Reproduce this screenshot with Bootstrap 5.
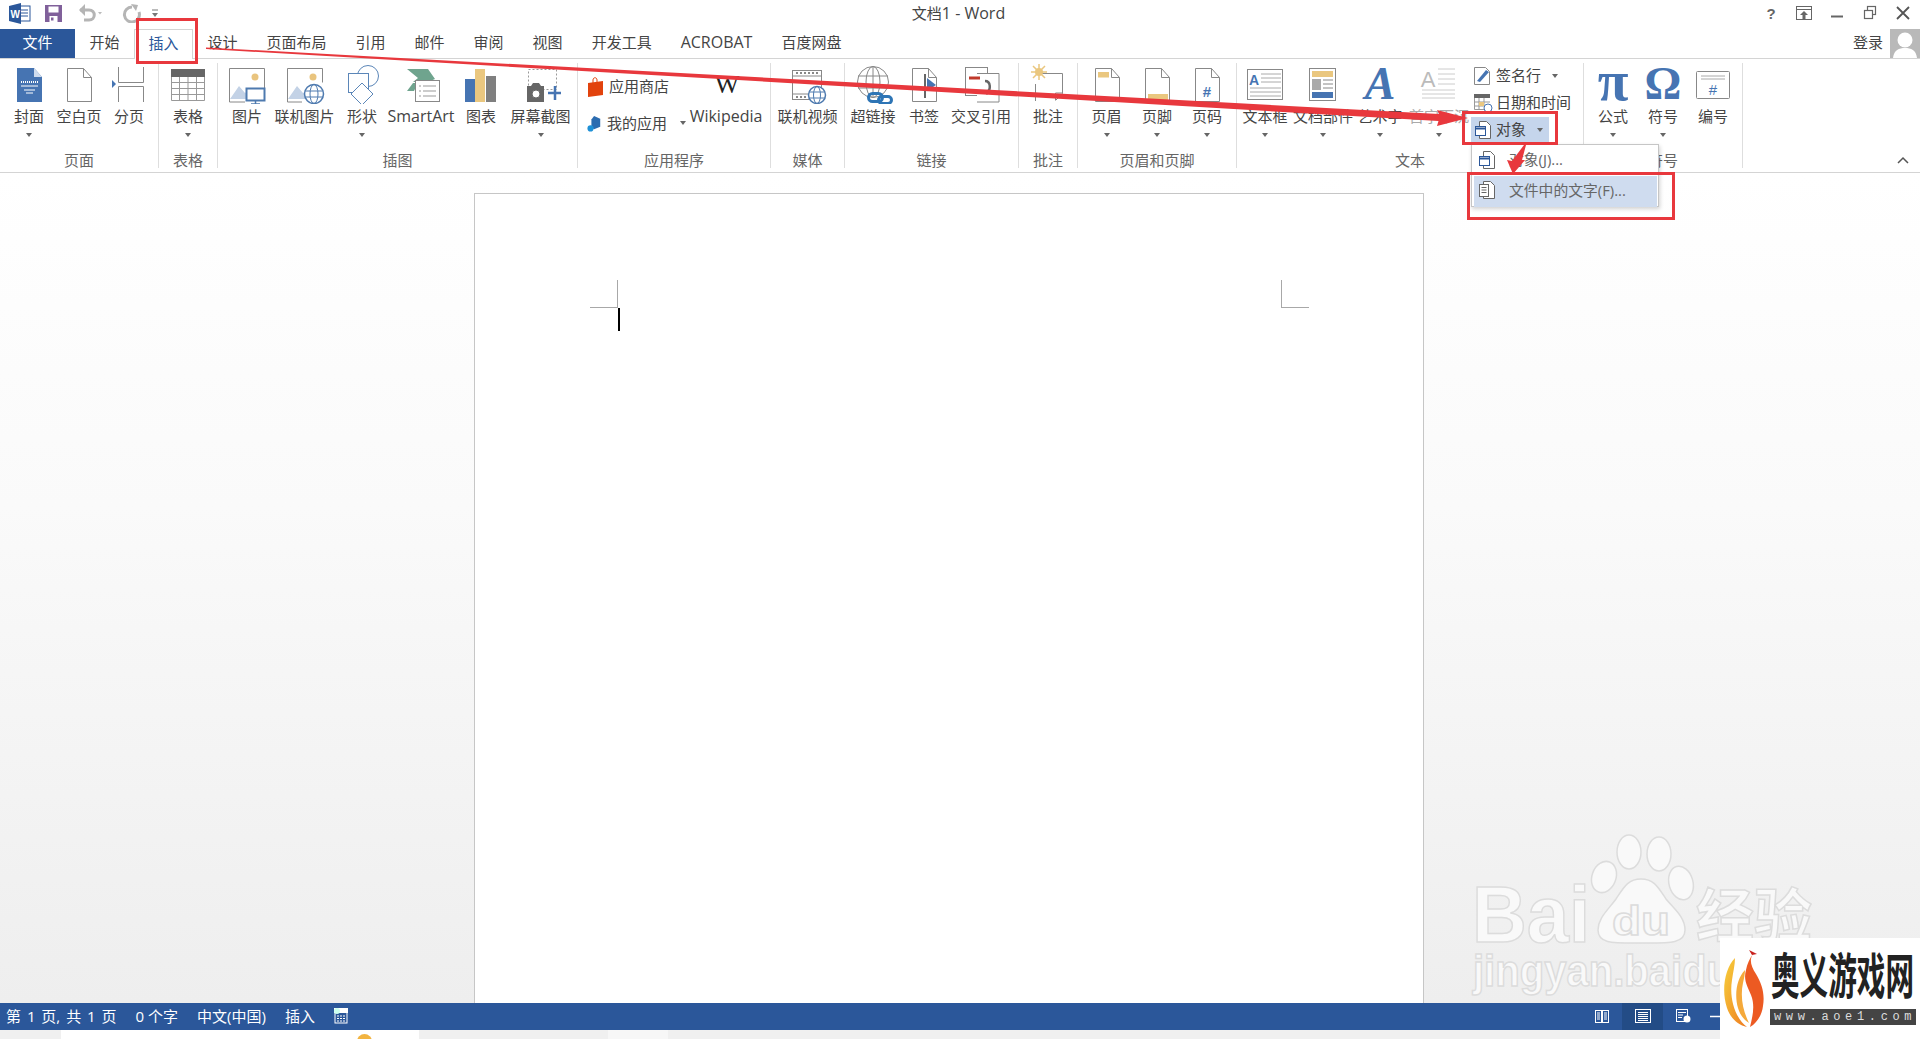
<!DOCTYPE html>
<html lang="zh-CN">
<head>
  <meta charset="UTF-8" />
  <meta name="viewport" content="width=device-width, initial-scale=1.0"/>
  <title>文档1 - Word</title>
  <link href="https://cdn.jsdelivr.net/npm/bootstrap@5.3.0/dist/css/bootstrap.min.css" rel="stylesheet"/>
  <style>
    html, body { height: 100%; }
    body { width: 1920px; height: 1039px; overflow: hidden; background: #fff; color: #444; font-family: "Open Sans", "Noto Sans CJK SC", sans-serif; font-size: 15px; position: relative; }
    .lat-txt { font-size: 16px; }
    .title-row { height: 29px; padding-bottom: 3px; }
    .title-side { flex: 1 1 0; }
    .qat { padding-left: 9px; gap: 14px; }
    .qat-undo { margin-left: 2px; }
    .qat-redo { margin-left: 6px; }
    .qat-more { margin-left: -5px; }
    .win-ctl { padding-right: 7px; gap: 13px; }
    .title-txt { line-height: 26px; color: #444; margin-right: 5px; }
    .tab-row { height: 30px; border-bottom: 1px solid #d4d4d4; }
    .tab-file { width: 75px; background: #2b579a; color: #fff; text-align: center; line-height: 27px; }
    .tab-item { padding: 0 14.5px; line-height: 27px; height: 30px; white-space: nowrap; }
    .tab-on { color: #2b579a; background: #fff; border: 1px solid #d4d4d4; border-bottom: 0; padding: 0 13.5px; }
    .login-txt { margin-right: 7px; line-height: 27px; }
    .avatar { width: 30px; height: 29px; background: #b9b9b9; display: block; }
    .ribbon { height: 114px; border-bottom: 1px solid #d4d4d4; padding-top: 4px; }
    .rgroup { height: 105px; border-right: 1px solid #dedede; flex: none; }
    .g159 { width: 159px; } .g59 { width: 59px; } .g360 { width: 360px; } .g193 { width: 193px; }
    .g74 { width: 74px; } .g174 { width: 174px; } .g347 { width: 347px; }
    .ritems { flex: 1 1 auto; padding-top: 1px; }
    .pl3 { padding-left: 3px; } .pl4 { padding-left: 4px; }
    .ritem { flex: none; display: flex; flex-direction: column; align-items: center; white-space: nowrap; }
    .ritem svg { display: block; flex: none; }
    .ritem span { line-height: 20px; margin-top: 2px; }
    .gly { height: 40px; flex: none; font-family: "Liberation Serif", serif; font-weight: 700; color: #4674b2; font-size: 46px; line-height: 40px; }
    .gly-pi { font-size: 56px; line-height: 34px; }
    .gly-a { font-style: italic; }
    .w46 { width: 46px; } .w50 { width: 50px; } .w51 { width: 51px; } .w54 { width: 54px; } .w56 { width: 56px; } .w57 { width: 57px; } .w58 { width: 58px; }
    .w59 { width: 59px; } .w60 { width: 60px; } .w64 { width: 64px; } .w68 { width: 68px; } .w73 { width: 73px; } .w80 { width: 80px; }
    .drop { width: 0; height: 0; border-left: 3.5px solid transparent; border-right: 3.5px solid transparent; border-top: 4px solid #666; margin-top: 7px; }
    .drop-in { margin: 0 0 0 8px; }
    .rlabel { line-height: 16px; text-align: center; color: #666; }
    .dim-txt { color: #aaa; }
    .small-col { width: 108px; flex: none; padding-top: 12px; }
    .small-btn { height: 20px; line-height: 20px; white-space: nowrap; padding-left: 9px; gap: 5px; margin-bottom: 17px; }
    .small-btn svg { margin-top: 1px; }
    .txt-col { width: 112px; flex: none; margin-top: -1px; }
    .txt-btn { height: 27px; white-space: nowrap; padding: 0 0 2px 2px; gap: 3px; }
    .txt-btn svg { flex: none; }
    .txt-on { background: #c5d5ec; width: 78px; height: 27px; position: relative; }
    .collapse-arrow { position: absolute; left: 1897px; top: 156px; }
    .doc-area { height: 830px; padding: 20px 0 0 474px; background: linear-gradient(#fff 0, #fafafa 40%, #eeeeee 100%); }
    .doc-page { width: 950px; height: 810px; background: #fff; border: 1px solid #c6c6c6; border-bottom: 0; position: relative; }
    .crop-mark { position: absolute; top: 86px; width: 28px; height: 28px; border-color: #a8a8a8; border-style: solid; border-width: 0; }
    .crop-l { left: 115px; border-right-width: 1px; border-bottom-width: 1px; }
    .crop-r { left: 806px; border-left-width: 1px; border-bottom-width: 1px; }
    .caret-bar { position: absolute; left: 143px; top: 114px; width: 2px; height: 23px; background: #000; }
    .status-bar { height: 27px; background: #2b579a; color: #fff; padding: 0 0 1px 6px; gap: 19px; font-size: 15px; }
    .stat-page { word-spacing: 2px; }
    .status-right { margin-left: auto; padding-right: 200px; }
    .view-btn { width: 41px; height: 27px; }
    .view-on { background: #234c86; }
    .zoom-minus { margin-left: 6px; }
    .under-strip { height: 9px; background: #f0f0f0; padding-left: 61px; }
    .task-a { width: 358px; background: #fff; position: relative; }
    .task-dot { position: absolute; left: 296px; top: 4px; width: 15px; height: 15px; border-radius: 50%; background: #f2b441; }
    .task-b { width: 60px; margin-left: 189px; background: #f7f7f7; }
    .menu-box { position: absolute; left: 0; top: 27px; width: 188px; height: 63px; margin: 0; padding: 2px 1px 2px 2px; border-radius: 0; border: 1px solid #c6c6c6; box-shadow: 1px 2px 4px rgba(0,0,0,.18); display: block; z-index: 5; font-size: 14.8px; }
    .menu-line { height: 27px; padding: 0 0 2px 3px; gap: 12px; color: #666; white-space: nowrap; }
    .menu-hot { height: 31px; margin-top: 2px; background: #cfdcef; padding-bottom: 3px; }
    .overlay-svg { position: absolute; left: 0; top: 0; pointer-events: none; }
    .over-red { z-index: 10; }
    .over-mark { z-index: 1; }
    .logo-box { position: absolute; left: 1720px; top: 938px; width: 200px; height: 101px; background: #fff; z-index: 8; padding: 10px 9px 9px 3px; gap: 5px; }
    .logo-cn { height: 52px; font-size: 28.6px; font-weight: 700; color: #222; line-height: 52px; white-space: nowrap; letter-spacing: 0; font-family: "Noto Sans CJK SC", sans-serif; padding-left: 1px; }
    .logo-cn span { display: inline-block; transform: scaleY(1.7); }
    .logo-url { height: 16px; margin-top: 9px; background: #444; color: #ddd; font: 12px/16px "Liberation Mono", monospace; letter-spacing: 4.65px; padding-left: 4px; white-space: nowrap; overflow: hidden; }
    .logo-flame { flex: none; }
  </style>
</head>
<body>

  <!-- title bar -->
  <div class="title-row d-flex align-items-center">
    <div class="title-side d-flex align-items-center qat">
      <svg width="22" height="21" viewBox="0 0 22 21"><rect x="9" y="3" width="12" height="15" fill="#fff" stroke="#2b579a"/><path d="M12 7h7M12 10h7M12 13h7" stroke="#2b579a"/><path d="M0 3l12-3v21L0 18z" fill="#2b579a"/><text x="1.5" y="14.5" fill="#fff" font-size="10" font-weight="700" font-family="Liberation Sans">W</text></svg>
      <svg width="17" height="17" viewBox="0 0 17 17"><path d="M0 0h17v17H0z" fill="#80609a"/><rect x="3.5" y="1.5" width="10" height="6" fill="#fff"/><rect x="4.5" y="11" width="8" height="6" fill="#fff"/><rect x="6" y="12.5" width="2.5" height="3" fill="#80609a"/></svg>
      <svg class="qat-undo" width="24" height="18" viewBox="0 0 24 18"><path d="M2 6h9c7 0 7 10 0 10H6" fill="none" stroke="#b5b5b5" stroke-width="3"/><path d="M7 0L1 6l6 6z" fill="#b5b5b5"/><path d="M20 8h4l-2 2.500z" fill="#bbb"/></svg>
      <svg class="qat-redo" width="20" height="19" viewBox="0 0 20 19"><path d="M10 3a7.500 7.500 0 1 0 7 5" fill="none" stroke="#b5b5b5" stroke-width="3"/><path d="M9 0l7 1-2 6z" fill="#b5b5b5"/></svg>
      <svg class="qat-more" width="8" height="9" viewBox="0 0 8 9"><path d="M1 1h6" stroke="#777"/><path d="M1 4h6L4 8z" fill="#777"/></svg>
    </div>
    <div class="title-txt">文档<span class="lat-txt">1 - Word</span></div>
    <div class="title-side d-flex align-items-center justify-content-end win-ctl">
      <svg width="20" height="16" viewBox="0 0 20 16"><text x="10" y="14" text-anchor="middle" font-size="15" font-weight="700" fill="#666" font-family="Liberation Sans">?</text></svg>
      <svg width="20" height="16" viewBox="0 0 20 16"><rect x="2.500" y="1.500" width="15" height="13" fill="none" stroke="#666"/><path d="M2 4.500h16" stroke="#666"/><path d="M10 6l4 4h-2.500v4h-3v-4H6z" fill="#666"/></svg>
      <svg width="20" height="16" viewBox="0 0 20 16"><path d="M4 11.500h12" stroke="#666" stroke-width="2"/></svg>
      <svg width="20" height="16" viewBox="0 0 20 16"><rect x="7.500" y="1.500" width="8" height="8" fill="none" stroke="#666" stroke-width="1.200"/><rect x="4.500" y="5.500" width="8" height="8" fill="#fff" stroke="#666" stroke-width="1.200"/></svg>
      <svg width="20" height="16" viewBox="0 0 20 16"><path d="M4 2l12 12M16 2L4 14" stroke="#555" stroke-width="1.800"/></svg>
    </div>
  </div>

  <!-- tabs -->
  <div class="tab-row d-flex">
    <div class="tab-file">文件</div>
    <div class="tab-item">开始</div>
    <div class="tab-item tab-on">插入</div>
    <div class="tab-item">设计</div>
    <div class="tab-item">页面布局</div>
    <div class="tab-item">引用</div>
    <div class="tab-item">邮件</div>
    <div class="tab-item">审阅</div>
    <div class="tab-item">视图</div>
    <div class="tab-item">开发工具</div>
    <div class="tab-item lat-txt">ACROBAT</div>
    <div class="tab-item">百度网盘</div>
    <div class="ms-auto d-flex">
      <div class="login-txt">登录</div>
      <svg class="avatar" viewBox="0 0 30 29"><circle cx="15" cy="11" r="7.500" fill="#fff"/><path d="M3 29c1-8 6-10 12-10s11 2 12 10z" fill="#fff"/></svg>
    </div>
  </div>

  <!-- ribbon -->
  <div class="ribbon d-flex">

    <div class="rgroup g159 d-flex flex-column">
      <div class="ritems d-flex pl4">
        <div class="ritem w50"><svg width="40" height="40" viewBox="0 0 40 40"><path d="M8 4h17l8 9v25H8z" fill="#4674b2"/><path d="M25 4v9h8z" fill="#cfdcee"/><path d="M12 18h17" stroke="#fff" stroke-width="2" stroke-dasharray="1 1"/><path d="M12 22h17M15 26h11M17 29h7" stroke="#fff"/></svg><span>封面</span><i class="drop"></i></div>
        <div class="ritem w50"><svg width="40" height="40" viewBox="0 0 40 40"><path d="M8.500 4.500h16l8 9v24h-24z" fill="#fff" stroke="#888"/><path d="M24.500 4.500v9h8" fill="none" stroke="#888"/></svg><span>空白页</span></div>
        <div class="ritem w50"><svg width="40" height="40" viewBox="0 0 40 40"><path d="M9.500 3v15.500h25V3M9.500 38V22.500h25V38" fill="none" stroke="#888"/><path d="M3 16l4 4-4 4z" fill="#4674b2"/></svg><span>分页</span></div>
      </div>
      <div class="rlabel">页面</div>
    </div>

    <div class="rgroup g59 d-flex flex-column">
      <div class="ritems d-flex">
        <div class="ritem w58"><svg width="40" height="40" viewBox="0 0 40 40"><rect x="3" y="5" width="34" height="8" fill="#666"/><path d="M3.500 13v23.500h33V13M3 18.500h34M3 24.500h34M3 30.500h34M11.500 13v24M20 13v24M28.500 13v24" fill="none" stroke="#999"/></svg><span>表格</span><i class="drop"></i></div>
      </div>
      <div class="rlabel">表格</div>
    </div>

    <div class="rgroup g360 d-flex flex-column">
      <div class="ritems d-flex">
        <div class="ritem w58"><svg width="40" height="40" viewBox="0 0 40 40"><path d="M2.500 4.500h35v20M18 38H2.500V4.500" fill="none" stroke="#888"/><circle cx="28" cy="13" r="3.500" fill="#e9c47e"/><path d="M3 35l9-13 6 7 3-2 6 8z" fill="#c3d2e6"/><rect x="19.500" y="24.500" width="18" height="12" fill="#fff" stroke="#4e7aaf" stroke-width="2"/><path d="M28.500 37v3M24 40h9" stroke="#4e7aaf" stroke-width="1.500"/></svg><span>图片</span></div>
        <div class="ritem w57"><svg width="40" height="40" viewBox="0 0 40 40"><path d="M2.500 4.500h35v14M17 38H2.500V4.500" fill="none" stroke="#888"/><circle cx="28" cy="13" r="3.500" fill="#e9c47e"/><path d="M3 35l9-13 6 7 3-2 6 8z" fill="#c3d2e6"/><circle cx="29" cy="30" r="9.500" fill="#fff" stroke="#4e7aaf" stroke-width="1.500"/><ellipse cx="29" cy="30" rx="4" ry="9.500" fill="none" stroke="#4e7aaf"/><path d="M20 27h18M20 33h18" stroke="#4e7aaf"/></svg><span>联机图片</span></div>
        <div class="ritem w58"><svg width="40" height="40" viewBox="0 0 40 40"><circle cx="26" cy="12" r="10.500" fill="none" stroke="#5b86b8"/><rect x="6.500" y="9.500" width="20" height="19" fill="#fff" stroke="#5b86b8"/><path d="M20 19l11 11-11 11-11-11z" fill="#fff" stroke="#5b86b8"/></svg><span>形状</span><i class="drop"></i></div>
        <div class="ritem w60"><svg width="40" height="40" viewBox="0 0 40 40"><path d="M6 5h21l7 10-7 3H12l5-4z" fill="#6fa48e"/><path d="M6 27l6-8h5l-4 8z" fill="#6fa48e"/><rect x="14.500" y="16.500" width="24" height="21" fill="#fff" stroke="#888"/><path d="M18 22h2M22 22h13M18 27h2M22 27h13M18 32h2M22 32h13" stroke="#999"/></svg><span class="lat-txt">SmartArt</span></div>
        <div class="ritem w60"><svg width="40" height="40" viewBox="0 0 40 40"><rect x="4" y="15" width="10" height="23" fill="#4674b2"/><rect x="14" y="5" width="10" height="33" fill="#eac77f"/><rect x="25" y="12" width="10" height="26" fill="#7f7f7f"/></svg><span>图表</span></div>
        <div class="ritem w59"><svg width="40" height="40" viewBox="0 0 40 40"><rect x="7.500" y="5.500" width="28" height="20" fill="none" stroke="#999" stroke-dasharray="2 2"/><path d="M6 22h4l2-3h6l2 3h3v16H6z" fill="#666"/><circle cx="15" cy="30" r="4" fill="#fff" stroke="#666"/><path d="M34 22v14M27 29h14" stroke="#4674b2" stroke-width="2.500"/></svg><span>屏幕截图</span><i class="drop"></i></div>
      </div>
      <div class="rlabel">插图</div>
    </div>

    <div class="rgroup g193 d-flex flex-column">
      <div class="ritems d-flex">
        <div class="small-col">
          <div class="small-btn d-flex"><svg width="17" height="20" viewBox="0 0 17 20"><path d="M1 6l15-2v14L1 20z" fill="#e2420d"/><path d="M6 7V3c0-3 4-3 4 0v3" fill="none" stroke="#e2420d"/></svg>应用商店</div>
          <div class="small-btn d-flex"><svg width="17" height="20" viewBox="0 0 17 20"><path d="M8 1l7 3v9l-7 3-3-2V5z" fill="#2b6cb0"/><circle cx="4" cy="15" r="3.500" fill="#1e90d6"/></svg>我的应用<i class="drop drop-in align-self-center"></i></div>
        </div>
        <div class="ritem w80"><svg width="40" height="40" viewBox="0 0 40 40"><text x="21" y="29" text-anchor="middle" font-size="26" font-family="Liberation Serif" fill="#222">W</text></svg><span class="lat-txt">Wikipedia</span></div>
      </div>
      <div class="rlabel">应用程序</div>
    </div>

    <div class="rgroup g74 d-flex flex-column">
      <div class="ritems d-flex">
        <div class="ritem w73"><svg width="40" height="40" viewBox="0 0 40 40"><rect x="4.500" y="6.500" width="29" height="29" fill="#fff" stroke="#888"/><path d="M5 12h28M5 30h20" stroke="#888"/><path d="M8 9h2M12 9h2M16 9h2M20 9h2M24 9h2M28 9h2M8 33h2M12 33h2M16 33h2" stroke="#888" stroke-width="2"/><circle cx="29" cy="31" r="8.500" fill="#fff" stroke="#4e7aaf" stroke-width="1.500"/><ellipse cx="29" cy="31" rx="3.500" ry="8.500" fill="none" stroke="#4e7aaf"/><path d="M21 28h16M21 34h16" stroke="#4e7aaf"/></svg><span>联机视频</span></div>
      </div>
      <div class="rlabel">媒体</div>
    </div>

    <div class="rgroup g174 d-flex flex-column">
      <div class="ritems d-flex">
        <div class="ritem w56"><svg width="40" height="40" viewBox="0 0 40 40"><circle cx="20" cy="18" r="15.500" fill="#fff" stroke="#888"/><ellipse cx="20" cy="18" rx="7" ry="15.500" fill="none" stroke="#888"/><path d="M5 12h30M5 24h30M20 3v30" stroke="#888"/><rect x="15.500" y="29.500" width="14" height="8" rx="4" fill="none" stroke="#2e75b5" stroke-width="3"/><rect x="25.500" y="32.500" width="13" height="7" rx="3.500" fill="none" stroke="#2e75b5" stroke-width="3"/></svg><span>超链接</span></div>
        <div class="ritem w46"><svg width="40" height="40" viewBox="0 0 40 40"><path d="M8.500 4.500h16l8 9v24h-24z" fill="#fff" stroke="#888"/><path d="M24.500 4.500v9h8" fill="none" stroke="#888"/><path d="M21 10v24" stroke="#666" stroke-width="2"/><path d="M23 14l9 7-9 6z" fill="#4674b2"/></svg><span>书签</span></div>
        <div class="ritem w68"><svg width="40" height="40" viewBox="0 0 40 40"><rect x="4.500" y="3.500" width="22" height="28" fill="#fff" stroke="#888"/><path d="M16 9.500h22V38H16" fill="#fff" stroke="#888"/><path d="M8 14h11" stroke="#c0392b" stroke-width="3"/><path d="M24 17c6 0 6 9 2 11" fill="none" stroke="#666" stroke-width="2.500"/><path d="M21 26h9l-4 5z" fill="#666"/></svg><span>交叉引用</span></div>
      </div>
      <div class="rlabel">链接</div>
    </div>

    <div class="rgroup g59 d-flex flex-column">
      <div class="ritems d-flex">
        <div class="ritem w58"><svg width="40" height="40" viewBox="0 0 40 40"><path d="M12 9.500h22.500v20l-7 7M7.500 20v17" fill="none" stroke="#888"/><path d="M27.500 36v-7h7" fill="none" stroke="#888"/><circle cx="11" cy="8" r="4" fill="#eac77f"/><path d="M11 0v16M3 8h16M5 2l12 12M17 2L5 14" stroke="#eac77f" stroke-width="1.500"/></svg><span>批注</span></div>
      </div>
      <div class="rlabel">批注</div>
    </div>

    <div class="rgroup g159 d-flex flex-column">
      <div class="ritems d-flex pl3">
        <div class="ritem w51"><svg width="40" height="40" viewBox="0 0 40 40"><path d="M8.500 4.500h16l8 9v24h-24z" fill="#fff" stroke="#888"/><path d="M24.500 4.500v9h8" fill="none" stroke="#888"/><rect x="11" y="8" width="11" height="5.500" fill="#eac77f"/></svg><span>页眉</span><i class="drop"></i></div>
        <div class="ritem w50"><svg width="40" height="40" viewBox="0 0 40 40"><path d="M8.500 4.500h16l8 9v24h-24z" fill="#fff" stroke="#888"/><path d="M24.500 4.500v9h8" fill="none" stroke="#888"/><rect x="11" y="30" width="20" height="6" fill="#eac77f"/></svg><span>页脚</span><i class="drop"></i></div>
        <div class="ritem w50"><svg width="40" height="40" viewBox="0 0 40 40"><path d="M8.500 4.500h16l8 9v24h-24z" fill="#fff" stroke="#888"/><path d="M24.500 4.500v9h8" fill="none" stroke="#888"/><text x="20" y="33" text-anchor="middle" font-size="15" font-weight="700" fill="#4674b2" font-family="Liberation Sans">#</text></svg><span>页码</span><i class="drop"></i></div>
      </div>
      <div class="rlabel">页眉和页脚</div>
    </div>

    <div class="rgroup g347 d-flex flex-column">
      <div class="ritems d-flex">
        <div class="ritem w56"><svg width="40" height="40" viewBox="0 0 40 40"><rect x="2.500" y="5.500" width="35" height="30" fill="#fff" stroke="#888"/><text x="9" y="21" text-anchor="middle" font-size="14" font-weight="700" fill="#4674b2" font-family="Liberation Sans">A</text><path d="M16 10h20M16 14h20M16 18h20M5 24h31M5 28h31M5 32h31" stroke="#aaa"/></svg><span>文本框</span><i class="drop"></i></div>
        <div class="ritem w60"><svg width="40" height="40" viewBox="0 0 40 40"><rect x="6.500" y="4.500" width="26" height="32" fill="#fff" stroke="#888"/><rect x="9" y="7" width="21" height="6" fill="#eac77f"/><rect x="9" y="15" width="9" height="11" fill="#aaa"/><path d="M20 16h10M20 20h10M20 24h10" stroke="#888"/><rect x="9" y="28" width="21" height="6" fill="#4674b2"/></svg><span>文档部件</span><i class="drop"></i></div>
        <div class="ritem w54"><div class="gly gly-a">A</div><span>艺术字</span><i class="drop"></i></div>
        <div class="ritem w64"><svg width="40" height="40" viewBox="0 0 40 40"><text x="9" y="23" text-anchor="middle" font-size="22" fill="#bbb" font-family="Liberation Sans">A</text><path d="M19 5h17M19 10h17M19 15h17M19 20h17M3 26h33M3 30h33M3 34h33" stroke="#ccc"/></svg><span class="dim-txt">首字下沉</span><i class="drop"></i></div>
        <div class="txt-col">
          <div class="txt-btn d-flex align-items-center"><svg width="20" height="20" viewBox="0 0 20 20"><path d="M1.500 1.500h11l4 4v13h-15z" fill="#fff" stroke="#888"/><path d="M4 15l9-11 3 2-9 10z" fill="#4674b2"/></svg>签名行<i class="drop drop-in mt-0"></i></div>
          <div class="txt-btn d-flex align-items-center"><svg width="20" height="20" viewBox="0 0 20 20"><rect x="1" y="1" width="16" height="4" fill="#666"/><path d="M1.500 5v11.500h12M1 9h16M1 13h10M6 5v12M11 5v8" fill="none" stroke="#999"/><rect x="6" y="9" width="5" height="4" fill="#eac77f"/><circle cx="15" cy="15" r="4" fill="#fff" stroke="#4674b2"/></svg>日期和时间</div>
          <div class="txt-on">
            <div class="txt-btn d-flex align-items-center"><svg width="20" height="20" viewBox="0 0 20 20"><path d="M6.500 1.500h7l4 4v13h-11z" fill="#fff" stroke="#666"/><rect x="2.500" y="6.500" width="10" height="9" fill="#fff" stroke="#2b579a"/><path d="M3 8.500h9" stroke="#2b579a" stroke-width="2"/></svg>对象<i class="drop drop-in mt-0"></i></div>
            <ul class="dropdown-menu show menu-box list-unstyled">
              <li class="menu-line d-flex align-items-center"><svg width="20" height="20" viewBox="0 0 20 20"><path d="M6.500 1.500h7l4 4v13h-11z" fill="#fff" stroke="#666"/><rect x="2.500" y="6.500" width="10" height="9" fill="#fff" stroke="#2b579a"/><path d="M3 8.500h9" stroke="#2b579a" stroke-width="2"/></svg>对象(J)...</li>
              <li class="menu-line menu-hot d-flex align-items-center"><svg width="20" height="20" viewBox="0 0 20 20"><path d="M6.500 1.500h7l4 4v13h-11z" fill="#fff" stroke="#666"/><rect x="2.500" y="4.500" width="9" height="12" fill="#fff" stroke="#666"/><path d="M4.500 7.500h5M4.500 10h5M4.500 12.500h5" stroke="#666"/></svg>文件中的文字(F)...</li>
            </ul>
          </div>
        </div>
      </div>
      <div class="rlabel">文本</div>
    </div>

    <div class="rgroup g159 d-flex flex-column">
      <div class="ritems d-flex pl4">
        <div class="ritem w50"><div class="gly gly-pi">π</div><span>公式</span><i class="drop"></i></div>
        <div class="ritem w50"><div class="gly">Ω</div><span>符号</span><i class="drop"></i></div>
        <div class="ritem w50"><svg width="40" height="40" viewBox="0 0 40 40"><rect x="3.500" y="7.500" width="33" height="27" rx="1" fill="#fff" stroke="#888"/><path d="M8 12h24M8 15h24" stroke="#aaa"/><text x="20" y="31" text-anchor="middle" font-size="15" fill="#4674b2" font-family="Liberation Sans">#</text></svg><span>编号</span></div>
      </div>
      <div class="rlabel">符号</div>
    </div>
  </div>
  <svg class="collapse-arrow" width="12" height="8" viewBox="0 0 12 8"><path d="M1 7l5-5 5 5" fill="none" stroke="#555" stroke-width="1.500"/></svg>

  <!-- document -->
  <div class="doc-area">
    <div class="doc-page">
      <div class="crop-mark crop-l"></div>
      <div class="crop-mark crop-r"></div>
      <div class="caret-bar"></div>
    </div>
  </div>

  <!-- status bar -->
  <div class="status-bar d-flex align-items-center">
    <div class="stat-page">第 1 页, 共 1 页</div>
    <div>0 个字</div>
    <div>中文(中国)</div>
    <div>插入</div>
    <svg width="14" height="16" viewBox="0 0 14 16"><rect x="1" y="1" width="12" height="14" fill="#2b579a" stroke="#fff"/><rect x="0" y="0" width="14" height="5" fill="#fff"/><circle cx="3" cy="3" r="3" fill="#cfe"/><path d="M3 8h2M6 8h2M9 8h2M3 10.500h2M6 10.500h2M9 10.500h2M3 13h2M6 13h2M9 13h2" stroke="#fff"/></svg>
    <div class="status-right d-flex align-items-center">
      <div class="view-btn d-flex align-items-center justify-content-center"><svg width="14" height="13" viewBox="0 0 14 13"><rect x=".5" y=".5" width="6" height="12" fill="none" stroke="#fff"/><rect x="7.500" y=".5" width="6" height="12" fill="none" stroke="#fff"/><path d="M2 3h3M2 5h3M2 7h3M2 9h3M9 3h3M9 5h3M9 7h3M9 9h3" stroke="#fff"/></svg></div>
      <div class="view-btn view-on d-flex align-items-center justify-content-center"><svg width="16" height="14" viewBox="0 0 16 14"><rect x=".5" y=".5" width="15" height="13" fill="none" stroke="#fff"/><path d="M3 3.500h10M3 5.500h10M3 7.500h10M3 9.500h10M3 11.500h10" stroke="#fff"/></svg></div>
      <div class="view-btn d-flex align-items-center justify-content-center"><svg width="15" height="14" viewBox="0 0 15 14"><rect x=".5" y=".5" width="11" height="12" fill="none" stroke="#fff"/><path d="M2 3.500h8M2 6h5M2 8.500h4" stroke="#fff"/><circle cx="11" cy="10" r="3.500" fill="#fff"/></svg></div>
      <svg class="zoom-minus" width="10" height="27" viewBox="0 0 10 27"><path d="M0 13.500h10" stroke="#fff" stroke-width="1.500"/></svg>
    </div>
  </div>

  <div class="under-strip d-flex">
    <div class="task-a overflow-hidden"><div class="task-dot"></div></div>
    <div class="task-b"></div>
  </div>

  <!-- baidu watermark -->
  <svg class="overlay-svg over-mark" width="1920" height="1039" viewBox="0 0 1920 1039">
    <g fill="#f9f9f9" stroke="#dcdcdc" stroke-width="1.500">
      <ellipse cx="1629" cy="852" rx="12" ry="17"/>
      <ellipse cx="1659" cy="854" rx="12" ry="17"/>
      <ellipse cx="1604" cy="877" rx="12" ry="16" transform="rotate(20 1604 877)"/>
      <ellipse cx="1681" cy="883" rx="12" ry="17" transform="rotate(-15 1681 883)"/>
      <path d="M1641 879c13 0 17 8 25 20 8 10 19 18 19 31 0 14-16 13-44 13s-43 1-43-13c0-12 10-20 18-31 8-12 12-20 25-20z"/>
      <text x="1472" y="942" font-family="Liberation Sans" font-weight="700" font-size="80" textLength="118" lengthAdjust="spacingAndGlyphs">Bai</text>
      <text x="1612" y="935" font-family="Liberation Sans" font-weight="700" font-size="40" textLength="58" lengthAdjust="spacingAndGlyphs">du</text>
      <text x="1696" y="937" font-family="Noto Sans CJK SC" font-weight="700" font-size="58" textLength="116">经验</text>
      <text x="1473" y="986" font-family="Liberation Sans" font-weight="700" font-size="44" textLength="258" lengthAdjust="spacingAndGlyphs">jingyan.baidu</text>
    </g>
  </svg>

  <!-- red annotations -->
  <svg class="overlay-svg over-red" width="1920" height="1039" viewBox="0 0 1920 1039">
    <g fill="none" stroke="#e8383d" stroke-width="3">
      <rect x="137.500" y="19.500" width="59" height="43"/>
      <rect x="1463.500" y="112.500" width="93" height="31"/>
      <rect x="1468.500" y="173.500" width="205" height="45"/>
    </g>
    <g fill="#e8383d">
      <path d="M206 47.500L1439 114l-2-4 31 8-31 8 1.500-5L206 49z"/>
      <path d="M1526 145l-4 15 3 0-12 14-6-14 5 1 12-16z"/>
    </g>
  </svg>

  <!-- site logo -->
  <div class="logo-box d-flex">
    <svg class="logo-flame" width="42" height="82" viewBox="0 0 42 82">
      <defs><linearGradient id="flameA" x1="0" y1="0" x2="1" y2="1"><stop offset="0" stop-color="#f7d13c"/><stop offset="1" stop-color="#ee7a20"/></linearGradient></defs>
      <path d="M12 10C2 20-2 42 4 60c3 9 10 17 20 19C12 70 6 50 9 32c1-8 3-15 3-22z" fill="url(#flameA)"/>
      <path d="M22 22c-8 8-11 24-7 38 2 7 6 12 11 15-6-12-9-26-6-40 1-5 2-9 2-13z" fill="#f5a93a"/>
      <path d="M30 6c-4 6-2 12 3 20 6 10 9 20 7 32-1 9-6 17-13 21 3-12 5-22 1-32-3-8-8-14-5-25 1-6 4-12 7-16z" fill="#ec5a22"/>
      <path d="M26 2l8 4-5 1z" fill="#c8201c"/>
    </svg>
    <div class="flex-grow-1">
      <div class="logo-cn"><span>奥义游戏网</span></div>
      <div class="logo-url">www.aoe1.com</div>
    </div>
  </div>

<script src="https://cdn.jsdelivr.net/npm/bootstrap@5.3.0/dist/js/bootstrap.bundle.min.js"></script>
</body>
</html>
